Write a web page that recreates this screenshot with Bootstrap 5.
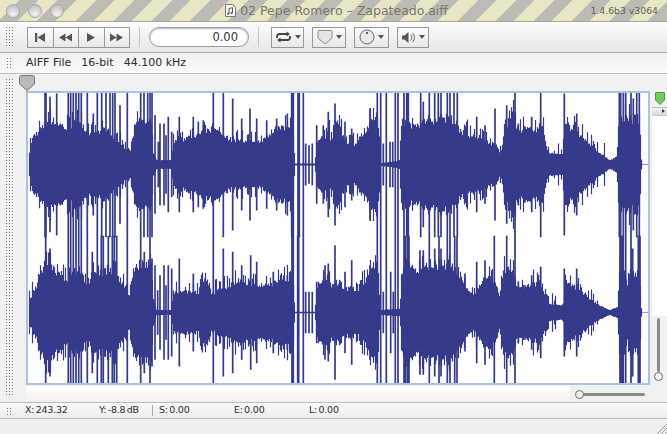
<!DOCTYPE html>
<html lang="en">
<head>
  <meta charset="UTF-8" />
  <meta name="viewport" content="width=device-width, initial-scale=1" />
  <title>02 Pepe Romero - Zapateado.aiff</title>
  <link href="https://cdn.jsdelivr.net/npm/bootstrap@5.3.0/dist/css/bootstrap.min.css" rel="stylesheet" />
  <style>
    html, body { width: 667px; height: 434px; overflow: hidden; margin: 0; }
    body { font-family: "DejaVu Sans", "Liberation Sans", sans-serif; background: #efefef; color: #333; }
    .win { width: 667px; height: 434px; }

    .title-strip { height: 22px; flex: none; border-bottom: 1px solid #a8a594;
      background: repeating-linear-gradient(135deg, #e9e6c6 0, #e9e6c6 14px, #bdbcb4 14px, #bdbcb4 27px); }
    .title-side { flex: 1 1 0; }
    .light-dots { gap: 8px; padding-left: 6px; }
    .light-dot { width: 14px; height: 14px; border-radius: 50%; border: 1px solid #a8a8a8;
      background: radial-gradient(circle at 50% 75%, #f4f4f4 0, #d8d8d8 45%, #b4b4b4 100%); }
    .title-text { font-size: 12.5px; color: #77766c; line-height: 21px; }
    .version-text { font-size: 9.3px; color: #5c5c5c; padding-right: 9px; font-weight: 500; }

    .tool-strip { height: 31px; flex: none; padding-left: 5px; border-bottom: 1px solid #aaa;
      background: linear-gradient(#fdfdfd, #e6e6e6); }
    .grip { width: 8px; flex: none;
      background-image: radial-gradient(circle, #777 0.8px, transparent 0.9px); background-size: 3px 3px; }
    .tool-strip .grip { height: 22px; margin-right: 14px; }
    .tool-btn { height: 21px; padding: 0; display: flex; align-items: center; justify-content: center; gap: 3px;
      border: 1px solid #979797; border-radius: 0; background: linear-gradient(#fbfbfb, #e8e8e8); }
    .tool-btn.transport { width: 26.5px; }
    .tool-btn.loop-btn { width: 33px; }
    .tool-btn.mark-btn { width: 34px; }
    .tool-btn.knob-btn { width: 35px; }
    .tool-btn.vol-btn { width: 32px; }
    .tool-sep { width: 1px; height: 20px; background: #c4c4c4; margin: 0 9px; flex: none; }
    .time-pill { width: 100px; height: 20px; flex: none; border: 1px solid #9c9c9c; border-radius: 10px; background: #fff;
      box-shadow: inset 0 1px 2px #bbb; font-size: 11.5px; line-height: 18px; text-align: right; padding-right: 10px; color: #333; }
    .drop-arrow { width: 0; height: 0; border-left: 3.5px solid transparent; border-right: 3.5px solid transparent; border-top: 4px solid #555; }
    .tool-set { margin-left: 3px; }

    .info-strip { height: 21px; flex: none; padding-left: 6px; border-bottom: 1px solid #bcbcbc;
      background: linear-gradient(#f1f1f1, #fbfbfb); font-size: 11px; color: #2e2e2e; }
    .info-strip .grip { height: 12px; margin-right: 13px; width: 7px; }
    .info-gap { margin-right: 10px; }

    .main-area { height: 328px; flex: none; background: #f1f1f1; position: relative; }
    .left-gutter { width: 26px; flex: none; padding: 4px 0 7px 5px; }
    .center-col { width: 624px; flex: none; padding-top: 17px; }
    .wave-frame { width: 624px; height: 294px; border: 2px solid #a8c4e2; background: #fff; }
    .wave-frame svg { display: block; }
    .below-wave { height: 16px; margin-top: 1px; width: 544px; background: linear-gradient(#fff, #f1f1f1); }
    .play-head { position: absolute; left: 19px; top: 1px; }
    .right-col { width: 17px; flex: none; padding-top: 17px; padding-left: 2px; position: relative; }
    .green-slot { height: 16px; display: flex; justify-content: center; padding-top: 1px; }
    .arrow-slot { height: 9px; background: linear-gradient(#f4f4f4, #d8d8d8); border-top: 1px solid #bbb; border-bottom: 1px solid #ccc; position: relative; }
    .arrow-slot::after { content: ""; position: absolute; right: 2px; top: 1px; border-left: 3px solid #333; border-top: 2.5px solid transparent; border-bottom: 2.5px solid transparent; }
    .white-slot { height: 200px; background: #fff; }
    .v-track { position: absolute; left: 7px; top: 244px; width: 3px; height: 54px; background: #8b8b8b; border-radius: 2px; }
    .h-track { position: absolute; left: 578px; top: 319px; width: 67px; height: 3px; background: #8b8b8b; border-radius: 2px; }
    .slide-knob { position: absolute; width: 9px; height: 9px; border-radius: 50%; background: #f4f4f4; border: 1.5px solid #666; }
    .v-track .slide-knob { left: -3px; bottom: -9px; }
    .h-track .slide-knob { left: -3px; top: -3px; }

    .status-strip { height: 17px; flex: none; border-top: 1px solid #bdbdbd; border-bottom: 1px solid #bdbdbd;
      background: linear-gradient(#fafafa, #ececec); font-size: 9.5px; letter-spacing: -.2px; word-spacing: -1.5px; color: #2b2b2b; padding-left: 6px; }
    .status-strip .grip { height: 8px; width: 7px; margin-right: 12px; }
    .stat-x { width: 74px; }
    .stat-y { width: 53px; }
    .stat-sep { width: 1px; height: 11px; background: #aaa; margin-right: 6px; }
    .stat-s, .stat-e { width: 75px; }
    .foot-strip { flex: 1 1 auto; background: #efefef; position: relative; }
    .resize-mark { position: absolute; right: 0; bottom: 0; }
  </style>
</head>
<body>
  <div class="win d-flex flex-column">

    <div class="title-strip d-flex align-items-center">
      <div class="title-side d-flex light-dots">
        <span class="light-dot"></span><span class="light-dot"></span><span class="light-dot"></span>
      </div>
      <div class="d-flex align-items-center gap-1">
        <svg width="11" height="13" viewBox="0 0 11 13"><path d="M.5.5h7l3 3v9H.5z" fill="#f6f6f6" stroke="#777"/><path d="M4 9.500V4.500l3.500-.8v5" fill="none" stroke="#555"/><ellipse cx="3.200" cy="9.700" rx="1.200" ry="1" fill="#555"/><ellipse cx="6.700" cy="8.900" rx="1.200" ry="1" fill="#555"/></svg>
        <span class="title-text">02 Pepe Romero – Zapateado.aiff</span>
      </div>
      <div class="title-side d-flex justify-content-end"><span class="version-text">1.4.6b3 v3064</span></div>
    </div>

    <div class="tool-strip d-flex align-items-center">
      <div class="grip"></div>
      <div class="btn-group">
        <button class="btn tool-btn transport"><svg width="14" height="11" viewBox="0 0 14 11" fill="#555"><path d="M2 1h2.200v9H2zM12 1v9L4.500 5.500z"/></svg></button>
        <button class="btn tool-btn transport"><svg width="15" height="11" viewBox="0 0 15 11" fill="#555"><path d="M7.500 1.500v8L1 5.500zM14 1.500v8L7.500 5.500z"/></svg></button>
        <button class="btn tool-btn transport"><svg width="12" height="11" viewBox="0 0 12 11" fill="#555"><path d="M2 1v9l8-4.500z"/></svg></button>
        <button class="btn tool-btn transport"><svg width="15" height="11" viewBox="0 0 15 11" fill="#555"><path d="M1 1.500v8l6.500-4zM7.500 1.500v8l6.500-4z"/></svg></button>
      </div>
      <div class="tool-sep"></div>
      <div class="time-pill">0.00</div>
      <div class="tool-sep"></div>
      <div class="d-flex gap-2 tool-set">
        <button class="btn tool-btn loop-btn"><svg width="17" height="12" viewBox="0 0 17 12" fill="none" stroke="#444" stroke-width="1.800"><path d="M2 7V5.500A2.500 2.500 0 0 1 4.500 3H12"/><path d="M15 5v1.500A2.500 2.500 0 0 1 12.500 9H5"/><path d="M11.500.5 15 3l-3.500 2.500zM5.500 6.500 2 9l3.500 2.500z" fill="#444" stroke="none"/></svg><span class="drop-arrow"></span></button>
        <button class="btn tool-btn mark-btn"><svg width="16" height="16" viewBox="0 0 16 16"><path d="M2 1.500h12a1 1 0 0 1 1 1V9l-7 6-7-6V2.500a1 1 0 0 1 1-1z" fill="#e4e4e4" stroke="#8a8a8a"/></svg><span class="drop-arrow"></span></button>
        <button class="btn tool-btn knob-btn"><svg width="16" height="16" viewBox="0 0 16 16"><circle cx="8" cy="8" r="7" fill="#e9e9e9" stroke="#666"/><circle cx="8" cy="4" r="1" fill="#333"/></svg><span class="drop-arrow"></span></button>
        <button class="btn tool-btn vol-btn"><svg width="15" height="13" viewBox="0 0 15 13"><path d="M1 4.500h2.500L7.500 1v11L3.500 8.500H1z" fill="#555"/><path d="M9.500 3.500a4 4 0 0 1 0 6M11.500 2a6 6 0 0 1 0 9" fill="none" stroke="#666"/></svg><span class="drop-arrow"></span></button>
      </div>
    </div>

    <div class="info-strip d-flex align-items-center">
      <div class="grip"></div>
      <span class="info-gap">AIFF File</span>
      <span class="info-gap">16-bit</span>
      <span>44.100 kHz</span>
    </div>

    <div class="main-area d-flex">
      <div class="left-gutter"><div class="grip h-100"></div></div>
      <div class="center-col">
        <div class="wave-frame">
          <svg id="wave" width="620" height="290" viewBox="28 93 620 290"></svg>
        </div>
        <div class="below-wave"></div>
      </div>
      <div class="right-col">
        <div class="green-slot"><svg width="10" height="13" viewBox="0 0 10 13"><path d="M1 .5h8a.5.500 0 0 1 .5.500v7L5 12.500.5 8V1A.5.500 0 0 1 1 .5z" fill="#6fce5d" stroke="#5b8f52"/></svg></div>
        <div class="arrow-slot"></div>
        <div class="white-slot"></div>
        <div class="v-track"><span class="slide-knob"></span></div>
      </div>
      <svg class="play-head" width="16" height="16" viewBox="0 0 16 16"><path d="M2.500.5h11a2 2 0 0 1 2 2V9L8 15.500.5 9V2.500a2 2 0 0 1 2-2z" fill="#b9b9b9" stroke="#777"/></svg>
      <div class="h-track"><span class="slide-knob"></span></div>
    </div>

    <div class="status-strip d-flex align-items-center">
      <div class="grip"></div>
      <span class="stat-x">X: 243.32</span>
      <span class="stat-y">Y: -8.8 dB</span>
      <span class="stat-sep"></span>
      <span class="stat-s">S: 0.00</span>
      <span class="stat-e">E: 0.00</span>
      <span>L: 0.00</span>
    </div>

    <div class="foot-strip">
      <svg class="resize-mark" width="11" height="11" viewBox="0 0 11 11" stroke="#999" fill="none"><path d="M1 11 11 1M5 11l6-6M9 11l2-2"/></svg>
    </div>
  </div>

  <script src="https://cdn.jsdelivr.net/npm/bootstrap@5.3.0/dist/js/bootstrap.bundle.min.js"></script>
  <script>
    // envelope points are [page x, half height], spikes are [page x, half height]
    const z = (off, pts, mid) => pts.map(p => [off + p[0] / 3, (mid - p[1]) / 3]);

    const bodyTop = z(0, [[85,238],[88,200],[100,150],[125,130],[150,100],[190,120],[200,130],[240,100],[270,155],[320,130],[350,170],[398,200],[405,110],[455,110],[460,200],[470,225],[515,225],[520,170],[640,130],[700,165],[780,170],[830,125],[880,130],[885,235],[945,235],[950,170],[990,140]], 238)
      .concat(z(330, [[0,175],[20,110],[50,170],[85,178],[130,100],[145,100],[150,235],[210,225],[215,110],[260,120],[340,90],[400,140],[500,180],[512,205],[520,160],[550,60],[560,130],[640,130],[655,205],[700,205],[705,110],[750,150],[800,195],[840,225],[860,215],[870,100],[930,100],[935,237]], 238));

    const bodyLow = z(0, [[85,232],[88,200],[100,165],[125,125],[130,85],[150,90],[190,130],[200,140],[240,100],[260,150],[280,120],[340,100],[390,180],[400,105],[455,80],[460,190],[470,225],[515,225],[520,170],[600,170],[605,140],[630,140],[635,175],[700,145],[800,150],[860,130],[880,130],[885,230],[945,230],[950,160],[990,110]], 232)
      .concat(z(330, [[0,150],[50,160],[90,160],[130,90],[145,85],[150,225],[210,220],[215,110],[280,100],[340,90],[380,110],[430,180],[460,130],[490,130],[510,180],[520,100],[550,95],[560,160],[630,140],[655,205],[700,210],[705,140],[745,160],[800,205],[840,225],[865,215],[870,60],[895,150],[900,110],[930,110],[935,232]], 232));

    const spikeTop = z(0, [[135,20],[138,20],[150,35],[170,25],[205,20],[212,20],[220,20],[228,20],[236,20],[244,20],[262,20],[280,85],[292,20],[305,20],[318,20],[330,20],[338,20],[345,20],[360,60],[382,20],[422,20],[432,20],[443,20],[450,20],[456,20],[465,90],[475,170],[480,115],[492,115],[498,150],[505,95],[515,140],[538,95],[580,95],[595,110],[610,105],[640,20],[670,20],[698,40],[725,100],[750,70],[770,100],[800,105],[830,100],[862,85],[875,20],[880,20],[894,20],[898,20],[910,20],[917,175],[927,180],[937,175],[950,120],[970,120],[985,80]], 238)
      .concat(z(330, [[15,55],[45,110],[65,130],[120,70],[142,20],[152,20],[160,175],[169,20],[180,170],[188,170],[196,20],[204,20],[222,20],[230,20],[235,20],[272,20],[280,50],[298,20],[314,20],[325,20],[333,20],[352,20],[360,20],[372,20],[382,20],[410,110],[440,95],[465,120],[495,70],[530,60],[555,20],[565,115],[585,125],[605,95],[632,20],[703,25],[740,85],[868,20],[872,20],[880,20],[887,20],[903,20],[910,40],[920,20],[928,20]], 238));

    const spikeLow = z(0, [[137,2],[150,40],[205,2],[212,2],[220,2],[228,2],[236,2],[244,2],[262,2],[277,50],[292,2],[304,2],[310,2],[325,2],[337,2],[343,2],[350,2],[382,2],[422,2],[433,50],[450,2],[456,70],[465,90],[473,165],[480,120],[492,90],[498,150],[505,90],[515,100],[538,70],[580,115],[615,130],[640,2],[670,40],[698,50],[725,90],[752,60],[770,80],[820,110],[862,120],[876,2],[880,2],[893,2],[896,2],[910,2],[917,170],[927,170],[937,170],[950,140],[975,90],[985,85]], 232)
      .concat(z(330, [[15,30],[45,110],[65,75],[120,90],[142,2],[152,2],[160,170],[169,2],[182,110],[190,170],[196,2],[204,2],[222,2],[226,2],[232,2],[237,2],[270,45],[280,45],[298,2],[314,40],[327,2],[333,40],[352,2],[360,2],[374,2],[381,2],[405,115],[440,80],[465,75],[493,2],[530,2],[555,2],[565,140],[585,150],[605,120],[632,95],[703,100],[740,100],[870,2],[875,2],[880,2],[887,2],[903,2],[908,40],[925,2],[930,2]], 232));

    let seed = 7;
    function rnd() {
      seed = (seed * 16807) % 2147483647;
      return seed / 2147483647;
    }

    function envAt(env, x) {
      for (let i = 1; i < env.length; i++) {
        if (x <= env[i][0]) {
          const t = (x - env[i - 1][0]) / (env[i][0] - env[i - 1][0]);
          return env[i - 1][1] + (env[i][1] - env[i - 1][1]) * t;
        }
      }
      return 0;
    }

    function bodyPath(env, mid) {
      let d = "";
      for (let x = 29; x < 642; x++) {
        let a = envAt(env, x + 0.5);
        // spiky fringe on top of the solid body
        a = a * (0.88 + rnd() * 0.2);
        if (a > 8 && rnd() < 0.32) a += 3 + rnd() * 10;
        a = Math.max(a, 0.8);
        d += `M${x + 0.5} ${(mid - a).toFixed(1)}V${(mid + a).toFixed(1)}`;
      }
      return d;
    }

    function spikePath(spikes, mid) {
      return spikes.map(s => `M${s[0].toFixed(1)} ${(mid - s[1]).toFixed(1)}V${(mid + s[1]).toFixed(1)}`).join("");
    }

    const wave = document.getElementById("wave");
    wave.innerHTML =
      `<path d="M641 164.500H648M641 312.500H648" stroke="#9a9ab8" stroke-width="1"/>` +
      `<path d="${bodyPath(bodyTop, 164.5)}${bodyPath(bodyLow, 312.5)}" stroke="#353a8b" stroke-width="1.2" fill="none"/>` +
      `<path d="${spikePath(spikeTop, 164.5)}${spikePath(spikeLow, 312.5)}" stroke="#353a8b" stroke-width="1.7" fill="none"/>`;
  </script>
</body>
</html>
